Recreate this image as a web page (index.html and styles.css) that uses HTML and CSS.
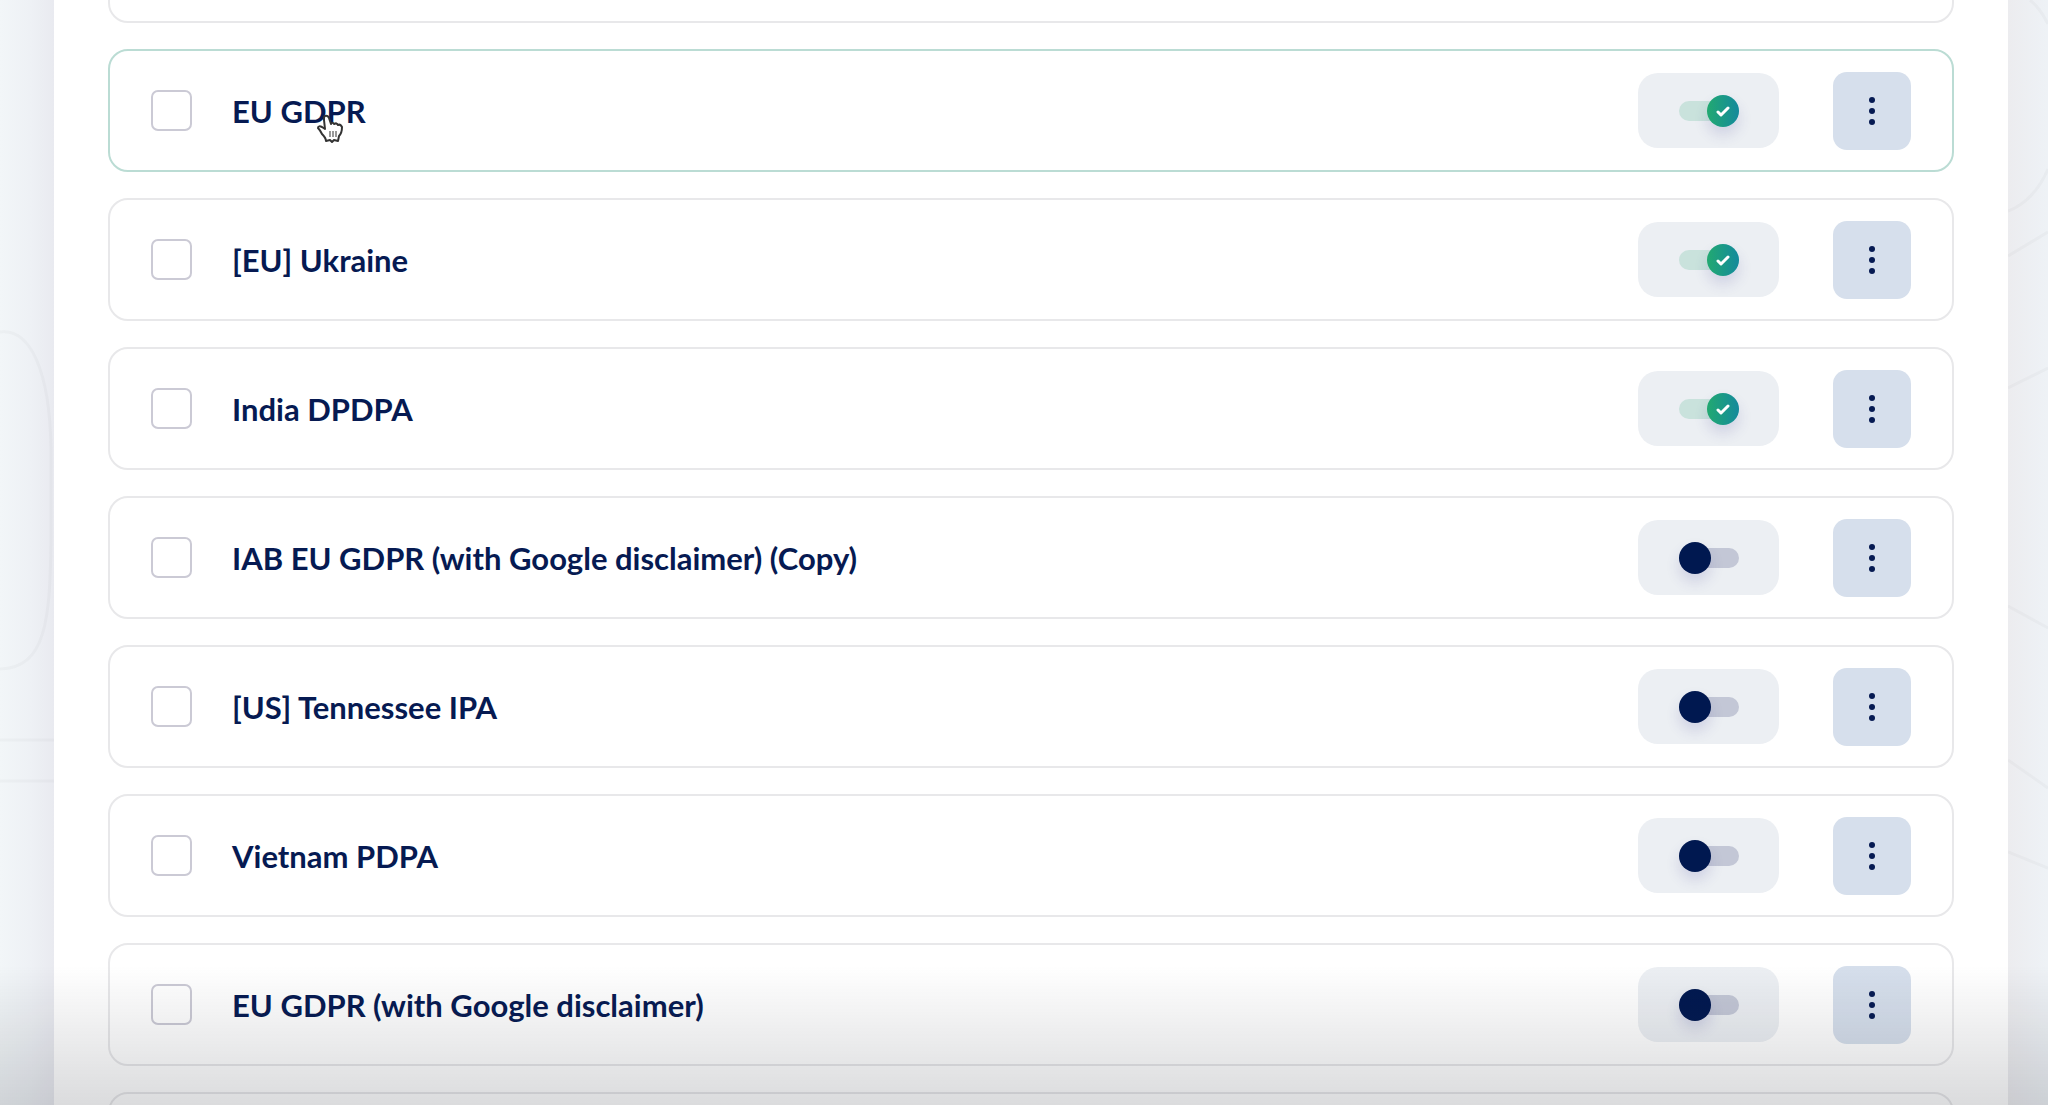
FILE: index.html
```html
<!DOCTYPE html>
<html lang="en">
<head>
  <meta charset="UTF-8" />
  <meta name="viewport" content="width=device-width, initial-scale=1" />
  <title>Templates</title>
  <link rel="stylesheet" href="styles.css">
</head>
<body>
  <!-- faint contour lines in the page margins -->
  <svg class="lines left" viewBox="0 0 54 1105"><path d="M0 332C30 328 50 370 51 450v90C50 620 46 668 0 669M0 740h54M0 781h54"/></svg>
  <svg class="lines right" viewBox="0 0 40 1105"><path d="M22 0q10 8 18 24M0 211q26-10 40-42M0 256l40-24M0 388l40-20M0 606l40 22M0 760l40 28M0 852l40 16"/></svg>

  <main class="panel">
    <ul class="rules">
      <li class="rule"></li>

      <li class="rule active">
        <input type="checkbox" class="pick" id="rule1">
        <label class="name" for="rule1">EU GDPR</label>
        <label class="switch">
          <input type="checkbox" role="switch" aria-label="EU GDPR" checked>
          <span class="track"><span class="knob"><svg viewBox="0 0 16 12"><path d="M3 7l3 3 7-7"/></svg></span></span>
        </label>
        <button type="button" class="more" aria-label="More"><svg viewBox="0 0 8 30"><circle cx="4" cy="4" r="3"/><circle cx="4" cy="15" r="3"/><circle cx="4" cy="26" r="3"/></svg></button>
        <svg class="pointer" viewBox="0 0 26 30"><path d="M7 4c0-3 4-3 5 0l2 6c1-2 3-1 3 0 2-1 3-1 4 1 2-1 3 0 4 2 0 4-1 7-3 9l-1 5-4-1-2 2-2-2-4 1c0-3-2-5-4-7-1-2-2-4-4-6 0-2 2-2 4-1l3 2L7 6z"/><path class="fold" d="M13 17v6M16 17v6M19 17v6"/></svg>
      </li>

      <li class="rule">
        <input type="checkbox" class="pick" id="rule2">
        <label class="name" for="rule2">[EU] Ukraine</label>
        <label class="switch">
          <input type="checkbox" role="switch" aria-label="[EU] Ukraine" checked>
          <span class="track"><span class="knob"><svg viewBox="0 0 16 12"><path d="M3 7l3 3 7-7"/></svg></span></span>
        </label>
        <button type="button" class="more" aria-label="More"><svg viewBox="0 0 8 30"><circle cx="4" cy="4" r="3"/><circle cx="4" cy="15" r="3"/><circle cx="4" cy="26" r="3"/></svg></button>
      </li>

      <li class="rule">
        <input type="checkbox" class="pick" id="rule3">
        <label class="name" for="rule3">India DPDPA</label>
        <label class="switch">
          <input type="checkbox" role="switch" aria-label="India DPDPA" checked>
          <span class="track"><span class="knob"><svg viewBox="0 0 16 12"><path d="M3 7l3 3 7-7"/></svg></span></span>
        </label>
        <button type="button" class="more" aria-label="More"><svg viewBox="0 0 8 30"><circle cx="4" cy="4" r="3"/><circle cx="4" cy="15" r="3"/><circle cx="4" cy="26" r="3"/></svg></button>
      </li>

      <li class="rule">
        <input type="checkbox" class="pick" id="rule4">
        <label class="name" for="rule4">IAB EU GDPR (with Google disclaimer) (Copy)</label>
        <label class="switch">
          <input type="checkbox" role="switch" aria-label="IAB EU GDPR (with Google disclaimer) (Copy)">
          <span class="track"><span class="knob"></span></span>
        </label>
        <button type="button" class="more" aria-label="More"><svg viewBox="0 0 8 30"><circle cx="4" cy="4" r="3"/><circle cx="4" cy="15" r="3"/><circle cx="4" cy="26" r="3"/></svg></button>
      </li>

      <li class="rule">
        <input type="checkbox" class="pick" id="rule5">
        <label class="name" for="rule5">[US] Tennessee IPA</label>
        <label class="switch">
          <input type="checkbox" role="switch" aria-label="[US] Tennessee IPA">
          <span class="track"><span class="knob"></span></span>
        </label>
        <button type="button" class="more" aria-label="More"><svg viewBox="0 0 8 30"><circle cx="4" cy="4" r="3"/><circle cx="4" cy="15" r="3"/><circle cx="4" cy="26" r="3"/></svg></button>
      </li>

      <li class="rule">
        <input type="checkbox" class="pick" id="rule6">
        <label class="name" for="rule6">Vietnam PDPA</label>
        <label class="switch">
          <input type="checkbox" role="switch" aria-label="Vietnam PDPA">
          <span class="track"><span class="knob"></span></span>
        </label>
        <button type="button" class="more" aria-label="More"><svg viewBox="0 0 8 30"><circle cx="4" cy="4" r="3"/><circle cx="4" cy="15" r="3"/><circle cx="4" cy="26" r="3"/></svg></button>
      </li>

      <li class="rule">
        <input type="checkbox" class="pick" id="rule7">
        <label class="name" for="rule7">EU GDPR (with Google disclaimer)</label>
        <label class="switch">
          <input type="checkbox" role="switch" aria-label="EU GDPR (with Google disclaimer)">
          <span class="track"><span class="knob"></span></span>
        </label>
        <button type="button" class="more" aria-label="More"><svg viewBox="0 0 8 30"><circle cx="4" cy="4" r="3"/><circle cx="4" cy="15" r="3"/><circle cx="4" cy="26" r="3"/></svg></button>
      </li>

      <li class="rule"></li>
    </ul>
  </main>
  <div class="fade"></div>
</body>
</html>
```

FILE: styles.css
```css
*, *::before, *::after { box-sizing: border-box; }

body {
  margin: 0;
  padding: 0 40px 0 54px;
  height: 100vh;
  overflow: hidden;
  font-family: Lato, "Open Sans", sans-serif;
  color: #061a52;
  background:
    linear-gradient(to right, #f2f6f8, #eef1f5 30px, #e9eaf0 54px) left / 54px 100% no-repeat,
    linear-gradient(to right, #ececef, #eef2f6) right / 40px 100% no-repeat;
}

.lines {
  position: fixed;
  top: 0;
  height: 1105px;
  fill: none;
  stroke: rgba(90, 100, 110, 0.04);
  stroke-width: 3;
}
.lines.left {
  left: 0;
  width: 54px;
}
.lines.right {
  right: 0;
  width: 40px;
}

.panel {
  height: 100%;
  padding: 0 54px;
  background: #fff;
  overflow: hidden;
}

/* list is scrolled part way down */
.rules {
  display: flex;
  flex-direction: column;
  gap: 26px;
  margin: -100px 0 0;
  padding: 0;
  list-style: none;
}
.rule {
  position: relative;
  display: flex;
  align-items: center;
  flex: none;
  height: 123px;
  padding: 0 41px;
  border: 2px solid #e8e8ea;
  border-radius: 20px;
}
.rule.active {
  border-color: #bbdcd4;
}

.pick {
  appearance: none;
  flex: none;
  width: 41px;
  height: 41px;
  margin: 0 40px 0 0;
  border: 2px solid #cbcad5;
  border-radius: 7px;
  background: transparent;
}

.name {
  flex: 1;
  font-size: 31px;
  line-height: 40px;
  font-weight: 700;
}

.switch {
  display: flex;
  align-items: center;
  justify-content: center;
  width: 141px;
  height: 75px;
  margin-right: 54px;
  border-radius: 20px;
  background: #eceff3;
  cursor: pointer;
}
.switch input {
  position: absolute;
  opacity: 0;
}
.track {
  display: flex;
  align-items: center;
  width: 60px;
  height: 20px;
  border-radius: 10px;
  background: #c3c7d6;
}
.knob {
  display: flex;
  align-items: center;
  justify-content: center;
  width: 32px;
  height: 32px;
  border-radius: 50%;
  background: #001850;
  box-shadow: 0 8px 14px rgba(60, 60, 150, 0.16);
}
.knob svg {
  width: 16px;
  height: 12px;
  fill: none;
  stroke: #fff;
  stroke-width: 3;
  stroke-linecap: round;
  stroke-linejoin: round;
}
.switch input:checked + .track {
  justify-content: flex-end;
  background: #c9e2dc;
}
.switch input:checked + .track .knob {
  background: linear-gradient(to right, #22a971, #148a9c);
}

.more {
  display: flex;
  align-items: center;
  justify-content: center;
  width: 78px;
  height: 78px;
  padding: 0;
  border: none;
  border-radius: 14px;
  background: #d6dfec;
  cursor: pointer;
}
.more svg {
  width: 8px;
  height: 30px;
  fill: #061a52;
}

.pointer {
  position: absolute;
  left: 207px;
  top: 63px;
  width: 26px;
  height: 30px;
  fill: #fff;
  stroke: #333;
  stroke-width: 2;
  stroke-linejoin: round;
}
.pointer .fold {
  stroke-width: 1;
}

.fade {
  position: fixed;
  left: 0;
  right: 0;
  bottom: 0;
  height: 140px;
  background: linear-gradient(to bottom, rgba(40, 44, 54, 0), rgba(40, 44, 54, 0.1) 60%, rgba(40, 44, 54, 0.17));
  pointer-events: none;
}
```
